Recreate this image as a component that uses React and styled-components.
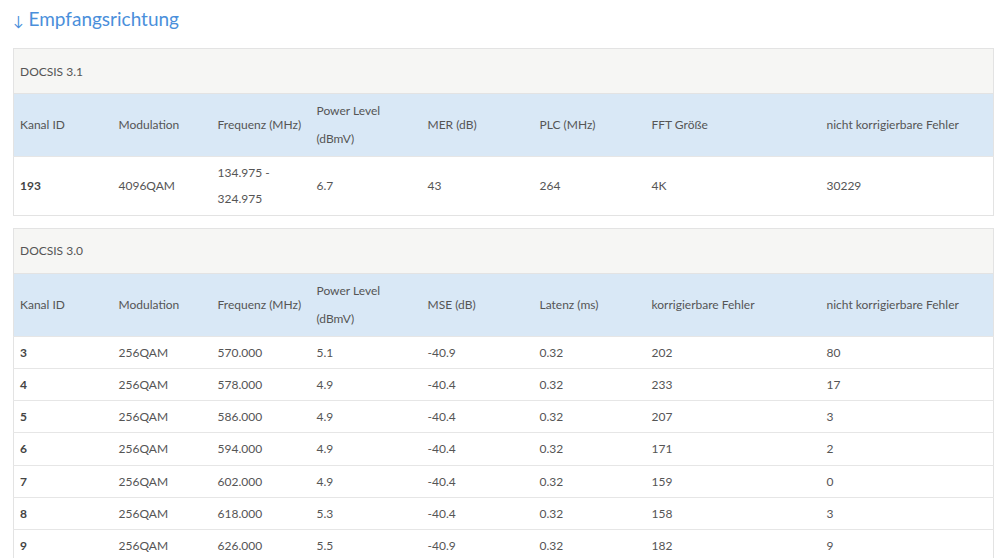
import React from 'react';
import styled, { createGlobalStyle } from 'styled-components';

const GlobalStyle = createGlobalStyle`
  html, body {
    margin: 0;
    padding: 0;
    background: #ffffff;
  }
  body {
    font-family: Lato, "Open Sans", sans-serif;
    color: #555555;
  }
`;

const Page = styled.div`
  padding: 5px 5px 0 13px;
  width: 981px;
`;

const Title = styled.h2`
  margin: 0 0 13px 0;
  font-size: 19px;
  font-weight: 400;
  line-height: 28px;
  color: #4a8fdb;
  display: flex;
  align-items: baseline;
  gap: 5px;
`;

const Arrow = styled.span`
  font-size: 14px;
`;

const Table = styled.table`
  width: 100%;
  border-collapse: collapse;
  border: 1px solid #e3e3e3;
  margin-bottom: 12px;
  font-size: 12px;
  table-layout: fixed;
`;

const SectionCell = styled.td`
  background: #f6f6f4;
  height: 44px;
  padding: 0 6px;
  border-bottom: 1px solid #e3e3e3;
`;

const HeadRow = styled.tr`
  background: #d9e8f6;
`;

const Th = styled.th`
  text-align: left;
  font-weight: 400;
  padding: 3px 0 3px 6px;
  line-height: 28px;
  height: 62px;
  box-sizing: border-box;
  vertical-align: middle;
  white-space: nowrap;
`;

const Td = styled.td`
  padding: 3px 0 2px 6px;
  line-height: 26.3px;
  border-top: 1px solid #e6e6e6;
  font-weight: ${p => (p.$bold ? 700 : 400)};
  color: ${p => (p.$bold ? '#444' : '#555')};
  vertical-align: middle;
`;

const widths = ['99px', '99px', '99px', '111px', '112px', '112px', '175px', 'auto'];

const Cols = () => (
  <colgroup>
    {widths.map((w, i) => (
      <col key={i} style={{ width: w }} />
    ))}
  </colgroup>
);

const rows30 = [
  ['3', '256QAM', '570.000', '5.1', '-40.9', '0.32', '202', '80'],
  ['4', '256QAM', '578.000', '4.9', '-40.4', '0.32', '233', '17'],
  ['5', '256QAM', '586.000', '4.9', '-40.4', '0.32', '207', '3'],
  ['6', '256QAM', '594.000', '4.9', '-40.4', '0.32', '171', '2'],
  ['7', '256QAM', '602.000', '4.9', '-40.4', '0.32', '159', '0'],
  ['8', '256QAM', '618.000', '5.3', '-40.4', '0.32', '158', '3'],
  ['9', '256QAM', '626.000', '5.5', '-40.9', '0.32', '182', '9'],
];

const Power = () => (
  <>
    Power Level
    <br />
    (dBmV)
  </>
);

export default function App() {
  return (
    <>
      <GlobalStyle />
      <Page>
        <Title>
          <Arrow>↓</Arrow>Empfangsrichtung
        </Title>

        <Table>
          <Cols />
          <tbody>
            <tr>
              <SectionCell colSpan={8}>DOCSIS 3.1</SectionCell>
            </tr>
            <HeadRow>
              <Th>Kanal ID</Th>
              <Th>Modulation</Th>
              <Th>Frequenz (MHz)</Th>
              <Th><Power /></Th>
              <Th>MER (dB)</Th>
              <Th>PLC (MHz)</Th>
              <Th>FFT Größe</Th>
              <Th>nicht korrigierbare Fehler</Th>
            </HeadRow>
            <tr>
              <Td $bold>193</Td>
              <Td>4096QAM</Td>
              <Td>134.975 -<br />324.975</Td>
              <Td>6.7</Td>
              <Td>43</Td>
              <Td>264</Td>
              <Td>4K</Td>
              <Td>30229</Td>
            </tr>
          </tbody>
        </Table>

        <Table>
          <Cols />
          <tbody>
            <tr>
              <SectionCell colSpan={8}>DOCSIS 3.0</SectionCell>
            </tr>
            <HeadRow>
              <Th>Kanal ID</Th>
              <Th>Modulation</Th>
              <Th>Frequenz (MHz)</Th>
              <Th><Power /></Th>
              <Th>MSE (dB)</Th>
              <Th>Latenz (ms)</Th>
              <Th>korrigierbare Fehler</Th>
              <Th>nicht korrigierbare Fehler</Th>
            </HeadRow>
            {rows30.map(r => (
              <tr key={r[0]}>
                {r.map((c, i) => (
                  <Td key={i} $bold={i === 0}>{c}</Td>
                ))}
              </tr>
            ))}
          </tbody>
        </Table>
      </Page>
    </>
  );
}
